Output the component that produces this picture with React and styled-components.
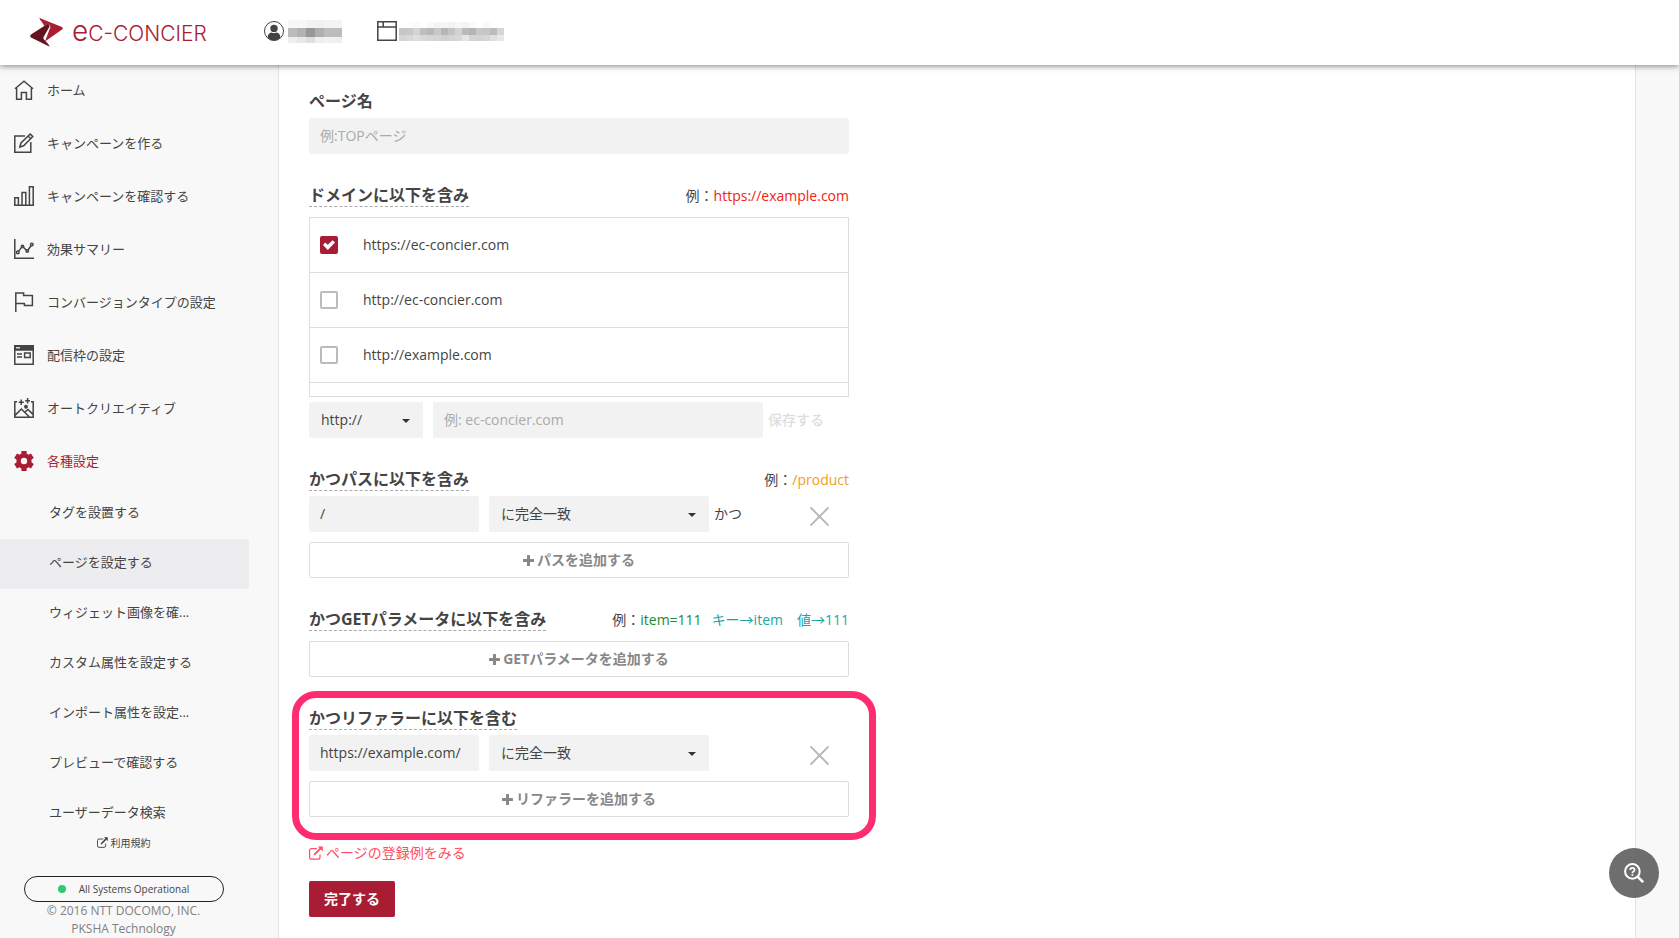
import styled, { createGlobalStyle } from 'styled-components'

const GlobalStyle = createGlobalStyle`
    * {
        box-sizing: border-box;
    }

    body {
        margin: 0;
        background: #f8f8f8;
        color: #444;
        font-family: 'Open Sans', 'Noto Sans CJK JP', sans-serif;
        font-size: 14px;
        line-height: 20px;
    }

    button, input, select {
        font: inherit;
        color: inherit;
    }

    a {
        color: inherit;
        text-decoration: none;
    }

    ul {
        list-style: none;
        margin: 0;
        padding: 0;
    }
`

/* icons */

const HomeIcon = () => (
    <LineIcon viewBox="0 0 20 20">
        <path d="M1 8.8 L10 1.2 L19 8.8 M2.6 8 V19.2 H7.4 V12.6 H12.4 V19.2 H17.4 V8" />
    </LineIcon>
)

const EditIcon = () => (
    <LineIcon viewBox="0 0 20 20">
        <path d="M11 3 H0.8 V19.2 H16.8 V9" />
        <path d="M5.8 14 L7 10 L16.2 1 L18.8 3.6 L9.6 12.8 Z M14 3 L16.8 5.8" />
    </LineIcon>
)

const BarsIcon = () => (
    <LineIcon viewBox="0 0 20 20">
        <path d="M0 19.2 H20 M0.8 19 V11.8 H4.4 V19 M8 19 V6.4 H11.8 V19 M15.4 19 V0.8 H19.2 V19" />
    </LineIcon>
)

const ChartIcon = () => (
    <LineIcon viewBox="0 0 20 20">
        <path d="M0.8 0 V19.2 H20 M4.4 12.4 L7.6 8.4 M9.4 8.2 L12.6 11.6 M14 11 L17 6.8" />
        <circle cx="3.8" cy="13.4" r="1.3" />
        <circle cx="8.5" cy="7.4" r="1.2" />
        <circle cx="13.3" cy="12" r="1.2" />
        <circle cx="17.8" cy="5.6" r="1.3" />
    </LineIcon>
)

const FlagIcon = () => (
    <LineIcon viewBox="0 0 20 20">
        <path d="M1.8 20 V1 H9.6 V3.4 H18.4 V13.6 H10.4 V11.4 H1.8" />
    </LineIcon>
)

const SlotIcon = () => (
    <LineIcon viewBox="0 0 20 20">
        <path d="M0.8 1 H19.2 V19.2 H0.8 Z M3 9 H8 M3 12 H8 M10.6 8 H16.2 V12.6 H10.6 Z" />
        <path d="M0.5 0.5 H19.5 V5 H0.5 Z" fill="#444" />
        <path d="M2 2.8 H6" stroke="#fff" strokeWidth="1.2" />
    </LineIcon>
)

const CreativeIcon = () => (
    <LineIcon viewBox="0 0 20 20">
        <path d="M3 3.8 H0.8 V19.2 H19.2 V3.8 H17 M1 17.4 L7.4 11 L15.4 19 M11 14 L14 11.4 L19 16.4" />
        <path d="M7.2 1.4 V7 M4.6 4.2 H9.8 M13.6 0 V5.4 M11.2 2.8 H16" />
        <circle cx="12" cy="8.8" r="1.2" fill="#444" />
    </LineIcon>
)

const GearIcon = () => (
    <svg width="20" height="20" viewBox="0 0 20 20" fill="#a81d33" aria-hidden="true">
        <path fillRule="evenodd" d="M7.4 0 H12.6 V2.6 L14.6 3.8 L17 2.5 L19.8 7 L17.5 8.5 V11.5 L19.8 13 L17 17.5 L14.6 16.2 L12.6 17.4 V20 H7.4 V17.4 L5.4 16.2 L3 17.5 L0.2 13 L2.5 11.5 V8.5 L0.2 7 L3 2.5 L5.4 3.8 L7.4 2.6 Z M10 6.8 A3.2 3.2 0 1 0 10 13.2 A3.2 3.2 0 1 0 10 6.8 Z" />
    </svg>
)

const ExternalIcon = ({ size }) => (
    <svg width={size} height={size} viewBox="0 0 14 14" fill="none" stroke="currentColor" aria-hidden="true">
        <path d="M8 2.6 H2.6 Q0.6 2.6 0.6 4.6 V11.2 Q0.6 13.2 2.6 13.2 H9 Q11 13.2 11 11.2 V8.4" strokeWidth="1.2" />
        <path d="M5.2 8.8 L11.6 2.4" strokeWidth="1.9" />
        <path d="M8.8 0.4 H13.8 V5.4 Z" fill="currentColor" stroke="none" />
    </svg>
)

const PlusIcon = () => (
    <svg width="11" height="11" viewBox="0 0 11 11" fill="#888" aria-hidden="true">
        <path d="M4 0.6 Q4 0 4.6 0 H6.4 Q7 0 7 0.6 V4 H10.4 Q11 4 11 4.6 V6.4 Q11 7 10.4 7 H7 V10.4 Q7 11 6.4 11 H4.6 Q4 11 4 10.4 V7 H0.6 Q0 7 0 6.4 V4.6 Q0 4 0.6 4 H4 Z" />
    </svg>
)

const CloseIcon = () => (
    <svg width="19" height="19" viewBox="0 0 19 19" stroke="#b5b5b5" strokeWidth="1.9" aria-hidden="true">
        <path d="M0.5 0.5 L18.5 18.5 M18.5 0.5 L0.5 18.5" />
    </svg>
)

const UserIcon = () => (
    <svg width="20" height="20" viewBox="0 0 20 20" aria-hidden="true">
        <circle cx="10" cy="10" r="9.5" fill="#fff" stroke="#444" />
        <circle cx="10" cy="7.4" r="3.7" fill="#444" />
        <path d="M3.6 16.8 Q3.8 11.6 7.6 11.4 Q10 12.8 12.4 11.4 Q16.2 11.6 16.4 16.8 Q13.6 19.6 10 19.6 Q6.4 19.6 3.6 16.8 Z" fill="#444" />
    </svg>
)

const WindowIcon = () => (
    <LineIcon viewBox="0 0 20 20">
        <path d="M0.8 0.8 H19.2 V19.2 H0.8 Z M1 6 H19 M6.2 1 V6" />
    </LineIcon>
)

const LogoMark = () => (
    <svg width="33" height="29" viewBox="0 0 33 29" aria-hidden="true">
        <path d="M9.4 0 L32 9 Q33.6 10.4 32 11.6 L15 23.4 L20.4 9 Q20.4 7 18.6 6 L10.6 2.4 Z" fill="#a81d33" />
        <path d="M18 5.4 L1 16.6 Q-0.6 18 1 19.4 L19.8 28.8 L18.4 26.2 L14 21.6 Q13 20.4 13.6 19 L19.6 8.6 Q19.8 6.6 18 5.4 Z" fill="#64121f" />
        <path d="M9.4 0 L19 5 L14.4 8 Z" fill="#a81d33" />
    </svg>
)

const Mosaic = ({ rows, cell, heights, label }) => {
    const width = rows[0].length * cell
    const tops = heights.map((h, i) => heights.slice(0, i).reduce((a, b) => a + b, 0))
    const height = heights.reduce((a, b) => a + b, 0)

    return (
        <svg width={width} height={height} role="img" aria-label={label} shapeRendering="crispEdges">
            {rows.map((row, y) => row.map((tone, x) => (
                <rect
                    key={`${x}-${y}`}
                    x={x * cell}
                    y={tops[y]}
                    width={cell}
                    height={heights[y]}
                    fill={`rgb(${tone}, ${tone}, ${tone})`}
                />
            )))}
        </svg>
    )
}

const userTones = [
    [247, 247, 243, 241, 243, 243],
    [188, 178, 152, 175, 188, 188],
    [238, 232, 223, 238, 241, 239],
]

const siteTones = [
    [254, 253, 250, 254, 249, 244, 246, 243, 248, 243, 250, 254, 249, 254, 255],
    [198, 200, 212, 190, 184, 200, 182, 196, 210, 186, 180, 200, 198, 188, 214],
    [212, 216, 222, 216, 214, 212, 208, 212, 216, 230, 212, 210, 214, 224, 232],
]

/* data */

const menu = [
    { label: 'ホーム', Icon: HomeIcon },
    { label: 'キャンペーンを作る', Icon: EditIcon },
    { label: 'キャンペーンを確認する', Icon: BarsIcon },
    { label: '効果サマリー', Icon: ChartIcon },
    { label: 'コンバージョンタイプの設定', Icon: FlagIcon },
    { label: '配信枠の設定', Icon: SlotIcon },
    { label: 'オートクリエイティブ', Icon: CreativeIcon },
    { label: '各種設定', Icon: GearIcon, active: true },
]

const subMenu = [
    'タグを設置する',
    'ページを設定する',
    'ウィジェット画像を確...',
    'カスタム属性を設定する',
    'インポート属性を設定...',
    'プレビューで確認する',
    'ユーザーデータ検索',
]

const domains = [
    { url: 'https://ec-concier.com', checked: true },
    { url: 'http://ec-concier.com' },
    { url: 'http://example.com' },
]

/* parts */

const Dropdown = ({ label, options, width }) => (
    <SelectWrap $width={width}>
        <select aria-label={label}>
            {options.map(option => <option key={option}>{option}</option>)}
        </select>
        <svg width="8" height="4" viewBox="0 0 8 4" aria-hidden="true">
            <path d="M0 0 H8 L4 4 Z" fill="#333" />
        </svg>
    </SelectWrap>
)

const MatchRow = ({ name, value, joiner }) => (
    <Row>
        <TextInput $width={170} aria-label={name} defaultValue={value} />
        <Gap />
        <Dropdown label={`${name} 条件`} width={220} options={['に完全一致', 'を含む']} />
        <Joiner>{joiner}</Joiner>
        <RemoveButton type="button" aria-label="削除">
            <CloseIcon />
        </RemoveButton>
    </Row>
)

const Sidebar = () => (
    <Aside>
        <nav>
            <ul>
                {menu.map(({ label, Icon, active }) => (
                    <li key={label}>
                        <MenuLink href="#" $active={active}>
                            <Icon />
                            {label}
                        </MenuLink>
                    </li>
                ))}
            </ul>
            <ul>
                {subMenu.map((label, i) => (
                    <li key={label}>
                        <SubLink href="#" $active={i === 1}>{label}</SubLink>
                    </li>
                ))}
            </ul>
        </nav>
        <Footer>
            <Terms href="#">
                <ExternalIcon size={11} />
                利用規約
            </Terms>
            <Status href="#">
                <i />
                All Systems Operational
            </Status>
            <small>© 2016 NTT DOCOMO, INC.</small>
            <small>PKSHA Technology</small>
        </Footer>
    </Aside>
)

export default function App() {
    return (
        <Page>
            <GlobalStyle />
            <Header>
                <Logo href="#">
                    <LogoMark />
                    <span><b>e</b>C-CONCIER</span>
                </Logo>
                <Account href="#">
                    <UserIcon />
                    <Mosaic rows={userTones} cell={9} heights={[8, 9, 6]} label="user" />
                </Account>
                <Site href="#">
                    <WindowIcon />
                    <Mosaic rows={siteTones} cell={7} heights={[6, 7, 6]} label="site" />
                </Site>
            </Header>
            <Body>
                <Sidebar />
                <Main>
                    <Form onSubmit={e => e.preventDefault()}>
                        <Section>
                            <Head>
                                <Title as="label" htmlFor="page-name" $plain>ページ名</Title>
                            </Head>
                            <TextInput id="page-name" placeholder="例:TOPページ" />
                        </Section>

                        <Section>
                            <Head $wide>
                                <Title>ドメインに以下を含み</Title>
                                <Example>例：<Hue $color="#f02314">https://example.com</Hue></Example>
                            </Head>
                            <DomainList>
                                {domains.map(({ url, checked }) => (
                                    <li key={url}>
                                        <label>
                                            <Checkbox type="checkbox" defaultChecked={checked} />
                                            {url}
                                        </label>
                                    </li>
                                ))}
                            </DomainList>
                            <Row>
                                <Dropdown label="プロトコル" width={114} options={['http://', 'https://']} />
                                <Gap />
                                <TextInput $width={330} aria-label="ドメイン" placeholder="例: ec-concier.com" />
                                <SaveButton type="button" disabled>保存する</SaveButton>
                            </Row>
                        </Section>

                        <Section>
                            <Head>
                                <Title>かつパスに以下を含み</Title>
                                <Example>例：<Hue $color="#f39c1f">/product</Hue></Example>
                            </Head>
                            <MatchRow name="パス" value="/" joiner="かつ" />
                            <AddButton type="button"><PlusIcon />パスを追加する</AddButton>
                        </Section>

                        <Section>
                            <Head $wide>
                                <Title>かつGETパラメータに以下を含み</Title>
                                <Example>
                                    例：<Hue $color="#1a8a35">item=111</Hue>
                                    <Hue $color="#1fa3a3" $spaced>キー→item　値→111</Hue>
                                </Example>
                            </Head>
                            <AddButton type="button"><PlusIcon />GETパラメータを追加する</AddButton>
                        </Section>

                        <Section>
                            <Highlight />
                            <Head>
                                <Title>かつリファラーに以下を含む</Title>
                            </Head>
                            <MatchRow name="リファラー" value="https://example.com/" />
                            <AddButton type="button"><PlusIcon />リファラーを追加する</AddButton>
                        </Section>

                        <HelpLink href="#">
                            <ExternalIcon size={14} />
                            ページの登録例をみる
                        </HelpLink>
                        <SubmitButton type="submit">完了する</SubmitButton>
                    </Form>
                </Main>
            </Body>
            <HelpButton type="button" aria-label="ヘルプ検索">
                <svg width="20" height="20" viewBox="0 0 20 20" fill="none" stroke="#fff">
                    <circle cx="8.4" cy="8.4" r="7.3" strokeWidth="2" />
                    <path d="M13.6 13.6 L19.2 19.2" strokeWidth="2.6" />
                    <path d="M6.2 7 Q6.2 4.9 8.4 4.9 Q10.6 4.9 10.6 6.8 Q10.6 7.8 9.4 8.5 Q8.4 9 8.4 10.2 M8.4 11.2 V12.8" strokeWidth="1.7" />
                </svg>
            </HelpButton>
        </Page>
    )
}

/* styles */

const LineIcon = styled.svg.attrs({ width: 20, height: 20, 'aria-hidden': true })`
    flex: none;
    fill: none;
    stroke: #444;
    stroke-width: 1.5;
`

const Page = styled.div`
    display: flex;
    flex-direction: column;
    min-height: 100vh;
`

const Header = styled.header`
    position: sticky;
    top: 0;
    z-index: 2;
    display: flex;
    align-items: center;
    height: 65px;
    padding: 0 30px;
    background: #fff;
    box-shadow: 0 1px 6px rgba(0, 0, 0, 0.5);

    a {
        display: flex;
        align-items: center;
    }
`

const Logo = styled.a`
    gap: 9px;
    width: 234px;
    color: #a81d33;
    font-family: Inter, sans-serif;
    font-size: 21px;
    font-weight: 300;

    b {
        font-size: 28px;
        font-weight: 300;
    }
`

const Account = styled.a`
    gap: 4px;
    width: 113px;
    padding-bottom: 3px;
`

const Site = styled.a`
    gap: 2px;
    padding-bottom: 3px;
`

const Body = styled.div`
    display: flex;
    flex: 1;
`

const Aside = styled.aside`
    flex: none;
    width: 278px;
    padding-right: 29px;
`

const MenuLink = styled.a`
    display: flex;
    align-items: center;
    gap: 13px;
    height: 50px;
    margin-bottom: 3px;
    padding-left: 14px;
    font-size: 13px;
    color: ${({ $active }) => $active ? '#a81d33' : '#444'};
`

const SubLink = styled.a`
    display: flex;
    align-items: center;
    height: 50px;
    padding: 0 0 4px 49px;
    font-size: 13px;
    background: ${({ $active }) => $active ? '#ededef' : 'transparent'};
    border-radius: 0 2px 2px 0;
`

const Footer = styled.footer`
    display: flex;
    flex-direction: column;
    align-items: center;
    padding-right: 2px;

    small {
        font-size: 12px;
        line-height: 18px;
        color: #808080;
    }
`

const Terms = styled.a`
    display: flex;
    align-items: center;
    gap: 3px;
    margin: -2px 0 28px;
    font-size: 10px;
    line-height: 10px;
`

const Status = styled.a`
    display: flex;
    align-items: center;
    justify-content: center;
    gap: 13px;
    width: 200px;
    height: 26px;
    border: 1px solid #222;
    border-radius: 13px;
    font-size: 10px;

    i {
        width: 8px;
        height: 8px;
        border-radius: 50%;
        background: #2ecc71;
    }
`

const Main = styled.main`
    flex: 1;
    margin-right: 43px;
    padding: 25px 30px 20px;
    background: #fff;
    border: solid #e2e2e2;
    border-width: 0 1px;
`

const Form = styled.form`
    max-width: 540px;
`

const Section = styled.section`
    position: relative;
    margin-bottom: 30px;
`

const Head = styled.div`
    display: flex;
    align-items: center;
    justify-content: space-between;
    height: 23px;
    margin-bottom: ${({ $wide }) => $wide ? '10px' : '5px'};
`

const Title = styled.h2`
    margin: 0;
    font-size: 16px;
    font-weight: bold;
    line-height: 22px;
    border-bottom: 1px dashed ${({ $plain }) => $plain ? 'transparent' : '#aaa'};
`

const Example = styled.span`
    line-height: 22px;
`

const Hue = styled.span`
    margin-left: ${({ $spaced }) => $spaced ? '10px' : '0'};
    color: ${({ $color }) => $color};
`

const Row = styled.div`
    display: flex;
    align-items: center;
`

const Gap = styled.span`
    width: 10px;
`

const TextInput = styled.input`
    display: block;
    width: ${({ $width }) => $width ? `${$width}px` : '100%'};
    height: 36px;
    padding: 0 11px 2px;
    border: 0;
    border-radius: 2px;
    background: #f2f2f2;

    &::placeholder {
        color: #aaa;
    }
`

const SelectWrap = styled.span`
    position: relative;
    width: ${({ $width }) => $width}px;

    select {
        display: block;
        width: 100%;
        height: 36px;
        padding: 0 12px;
        border: 0;
        border-radius: 2px;
        background: #f2f2f2;
        appearance: none;
    }

    svg {
        position: absolute;
        top: 17px;
        right: 13px;
        pointer-events: none;
    }
`

const Joiner = styled.span`
    flex: 1;
    padding-left: 5px;
`

const RemoveButton = styled.button`
    display: flex;
    margin: 5px 20px 0 0;
    padding: 0;
    border: 0;
    background: none;
    cursor: pointer;
`

const SaveButton = styled.button`
    padding: 0 5px;
    border: 0;
    background: none;
    color: #ddd;
    font-weight: 500;
`

const DomainList = styled.ul`
    margin-bottom: 5px;
    padding-bottom: 13px;
    border: 1px solid #ddd;

    li {
        border-bottom: 1px solid #ddd;
    }

    label {
        display: flex;
        align-items: center;
        gap: 25px;
        height: 54px;
        padding-left: 10px;
    }
`

const Checkbox = styled.input`
    display: grid;
    place-items: center;
    width: 18px;
    height: 18px;
    margin: 0;
    border: 2px solid #bbb;
    border-radius: 2px;
    appearance: none;

    &:checked {
        border-color: #a81d33;
        background: #a81d33;
    }

    &:checked::before {
        content: '';
        width: 12px;
        height: 10px;
        background: #fff;
        clip-path: polygon(0 50%, 18% 26%, 40% 48%, 80% 2%, 100% 26%, 40% 100%);
    }
`

const AddButton = styled.button`
    display: flex;
    align-items: center;
    justify-content: center;
    gap: 3px;
    width: 100%;
    height: 36px;
    padding: 0;
    border: 1px solid #ddd;
    border-radius: 2px;
    background: #fff;
    color: #888;
    font-weight: bold;
    cursor: pointer;

    ${Row} + & {
        margin-top: 10px;
    }
`

/* frame drawn over the referrer block */
const Highlight = styled.div`
    position: absolute;
    inset: -16px -27px -23px -17px;
    border: 7px solid #ff2d6f;
    border-radius: 24px;
    pointer-events: none;
`

const HelpLink = styled.a`
    display: flex;
    align-items: center;
    gap: 3px;
    margin: -4px 0 18px;
    color: #ff4f63;
`

const SubmitButton = styled.button`
    height: 36px;
    padding: 0 15px;
    border: 0;
    border-radius: 2px;
    background: #a81d33;
    color: #fff;
    font-weight: bold;
    cursor: pointer;
`

const HelpButton = styled.button`
    position: fixed;
    right: 20px;
    bottom: 40px;
    display: flex;
    align-items: center;
    justify-content: center;
    width: 50px;
    height: 50px;
    padding: 0;
    border: 0;
    border-radius: 50%;
    background: rgba(85, 85, 85, 0.85);
    cursor: pointer;
`
